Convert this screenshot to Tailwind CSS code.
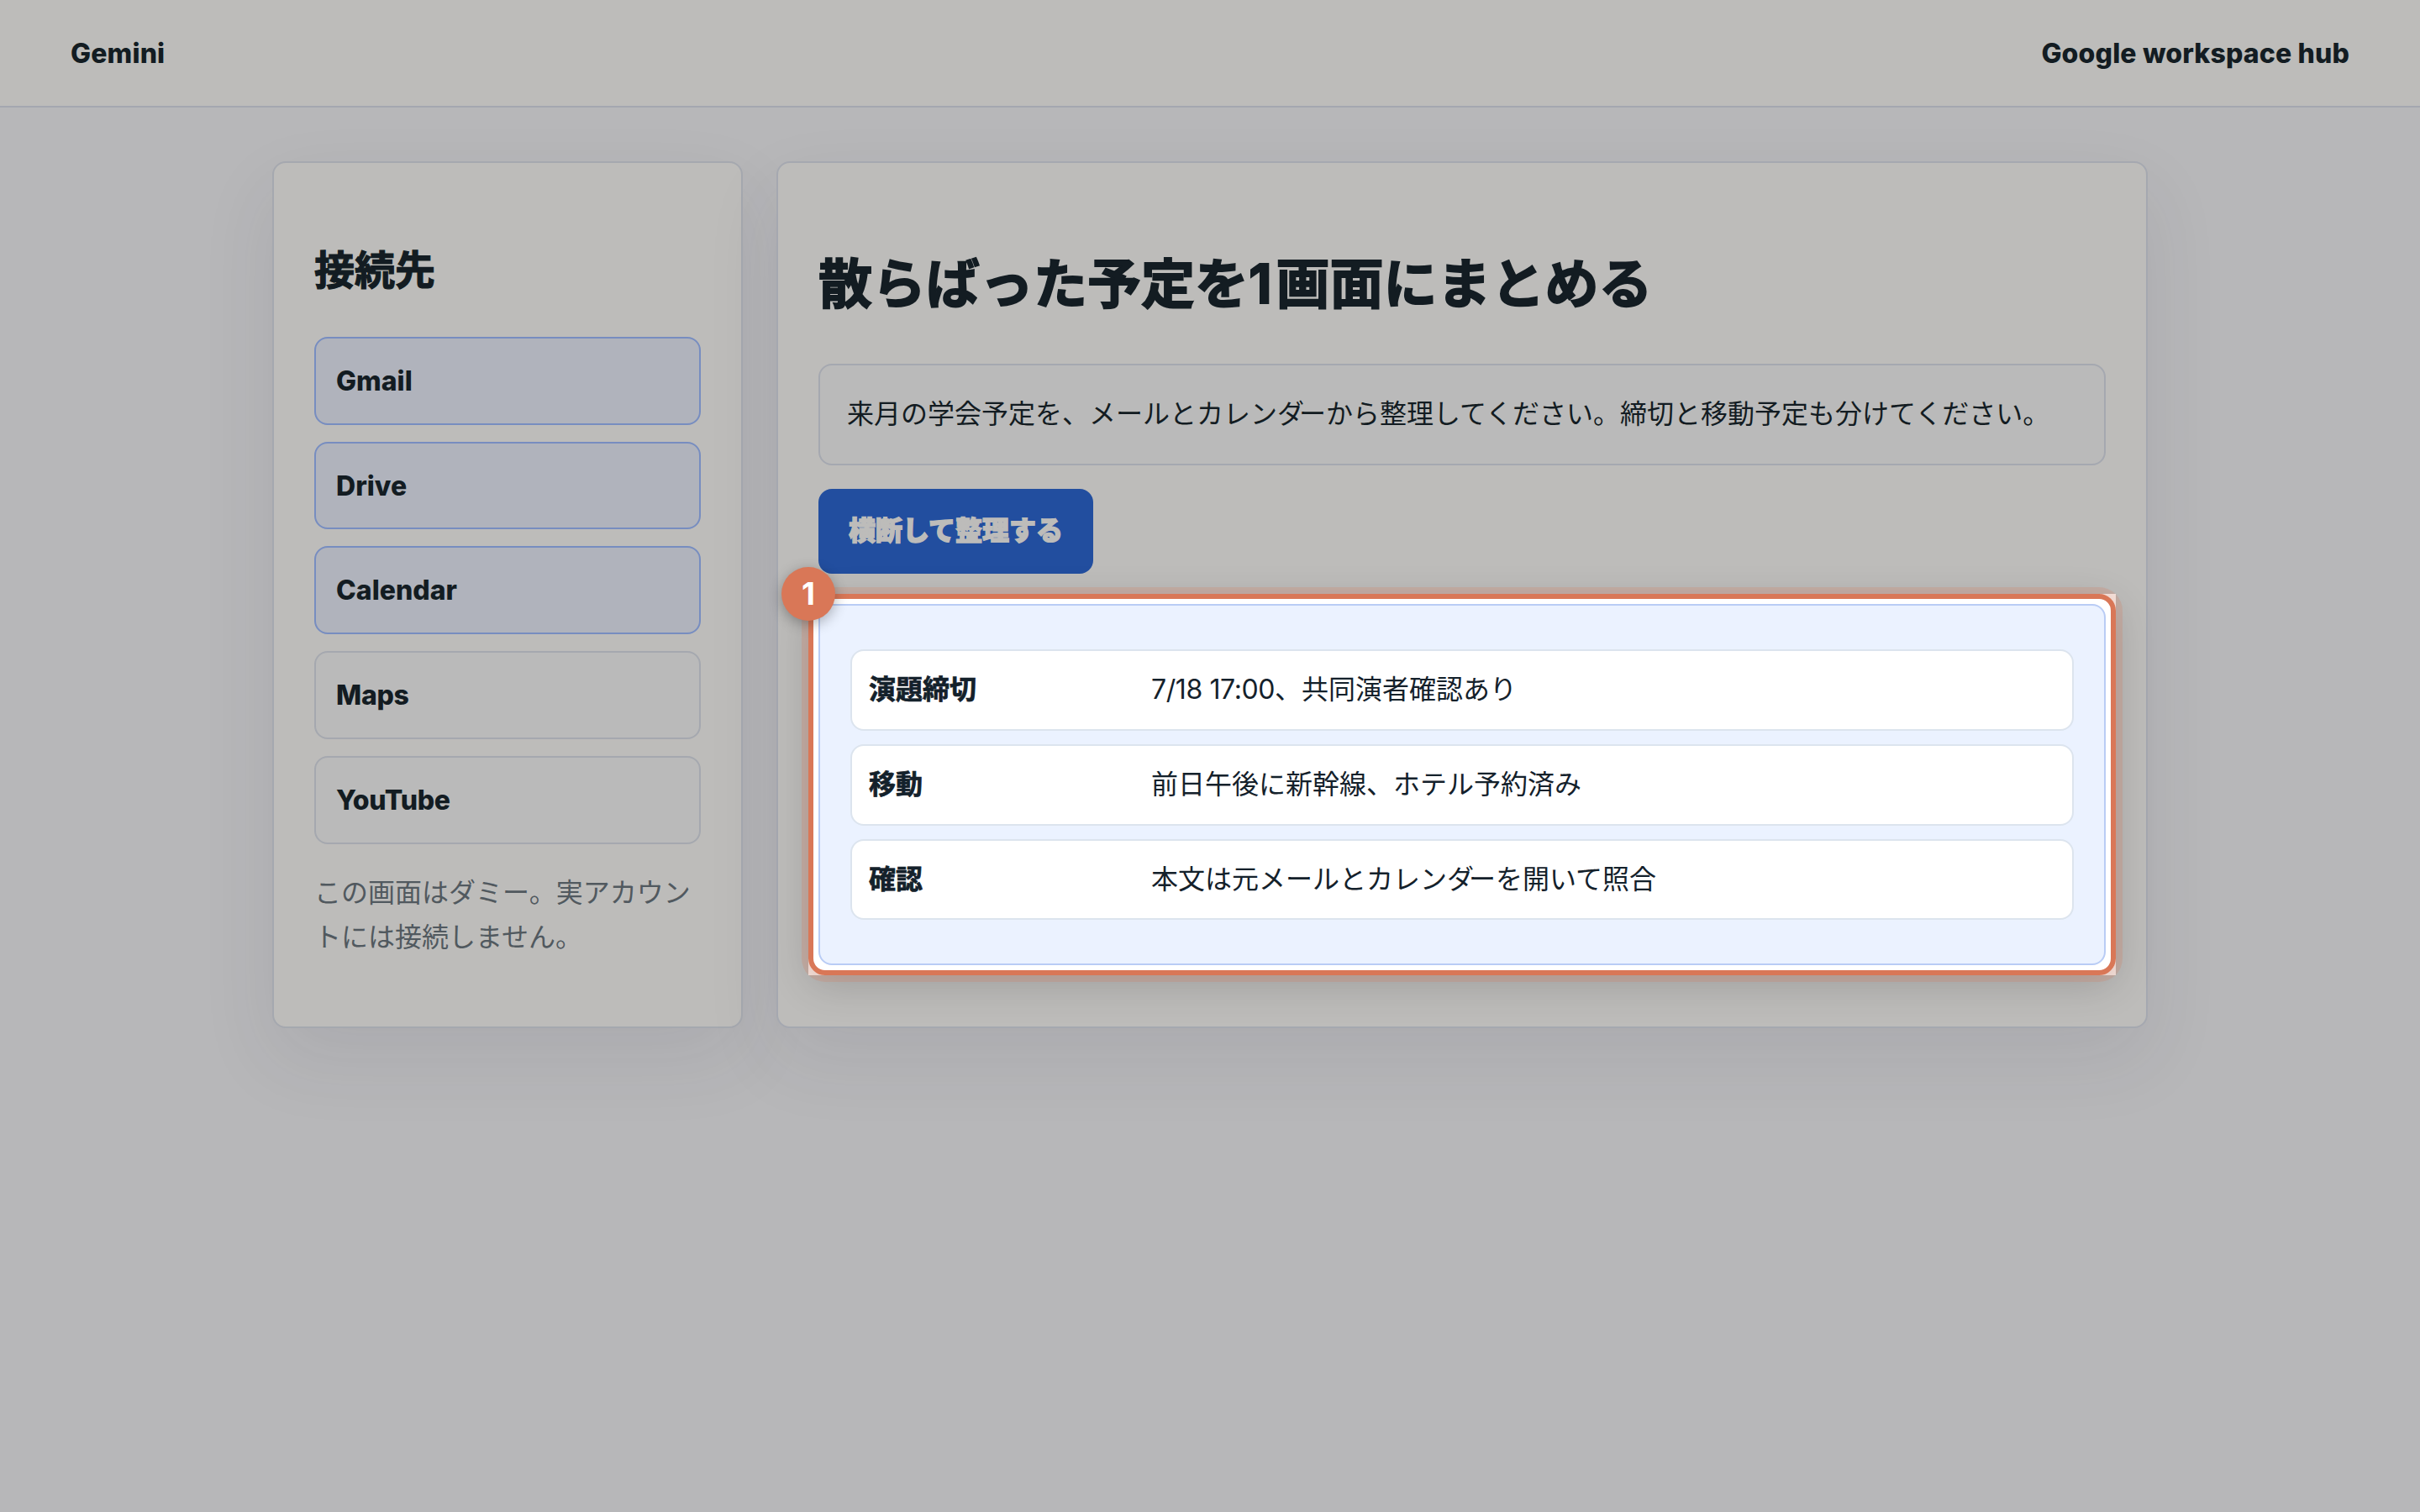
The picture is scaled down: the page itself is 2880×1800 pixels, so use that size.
<!DOCTYPE html>
<html lang="ja">
  <head>
    <meta charset="UTF-8" />
    <meta name="viewport" content="width=device-width, initial-scale=1.0" />
    <title>Gemini</title>
    <script src="https://cdn.jsdelivr.net/npm/@tailwindcss/browser@4"></script>
  </head>
  <body
    class="min-h-screen bg-[#b7b7b9] font-['Inter','Noto_Sans_CJK_JP',sans-serif] text-[32px] leading-[1.65] text-[#131c22]"
  >
    <header
      class="flex h-32 items-center justify-between border-b-2 border-[#a4a7b0] bg-[#bdbcba] px-[84px] pt-0.5 font-extrabold tracking-[0.15px]"
    >
      <span>Gemini</span>
      <span>Google workspace hub</span>
    </header>
    <main
      class="mx-auto mt-16 grid w-[2232px] grid-cols-[560px_1fr] gap-10"
    >
      <aside
        class="rounded-2xl border-2 border-[#a5a8af] bg-[#bdbcba] p-12 shadow-[0_36px_90px_rgba(42,42,70,0.085)]"
      >
        <h2
          class="my-[39.84px] text-[48px] leading-[1.65] font-bold [-webkit-text-stroke:1.2px_#131c22]"
        >
          接続先
        </h2>
        <div class="flex flex-col gap-5 font-extrabold">
          <div
            class="rounded-2xl border-2 border-[#778dc0] bg-[#b0b3bc] px-6 pt-[25px] pb-[23px]"
          >
            Gmail
          </div>
          <div
            class="rounded-2xl border-2 border-[#778dc0] bg-[#b0b3bc] px-6 pt-[25px] pb-[23px]"
          >
            Drive
          </div>
          <div
            class="rounded-2xl border-2 border-[#778dc0] bg-[#b0b3bc] px-6 pt-[25px] pb-[23px]"
          >
            Calendar
          </div>
          <div
            class="rounded-2xl border-2 border-[#a5a8af] bg-[#bababa] px-6 pt-[25px] pb-[23px] tracking-[-0.3px]"
          >
            Maps
          </div>
          <div
            class="rounded-2xl border-2 border-[#a5a8af] bg-[#bababa] px-6 pt-[25px] pb-[23px] tracking-[-0.3px]"
          >
            YouTube
          </div>
        </div>
        <p class="my-8 text-[#51595f]">
          この画面はダミー。実アカウントには接続しません。
        </p>
      </aside>
      <section
        class="rounded-2xl border-2 border-[#a5a8b0] bg-[#bdbcba] p-12 shadow-[0_36px_90px_rgba(42,42,70,0.085)]"
      >
        <h1
          class="my-[42.88px] text-[64px] leading-[1.65] font-bold [-webkit-text-stroke:1.8px_#131c22]"
        >
          散らばった予定を<span class="tracking-[5px]">1</span>画面にまとめる
        </h1>
        <div class="rounded-2xl border-2 border-[#a5a8b0] bg-[#bababa] p-8">
          来月の学会予定を、メールとカレン<span class="tracking-[-6px]">ダ</span>ーから整理してください。締切と移動予定も分けてください。
        </div>
        <button
          class="mt-7 block w-[327px] rounded-2xl bg-[#224e9f] py-6 text-center font-black text-[#bdbcba] [-webkit-text-stroke:1.4px_#bdbcba]"
        >
          横断して整理する
        </button>
        <!-- highlighted result -->
        <div class="relative mt-9 text-[#14212b]">
          <div class="absolute -inset-3 bg-white"></div>
          <div
            class="relative flex flex-col gap-4 rounded-2xl border-2 border-[#b9ccf5] bg-[#ebf2ff] px-9 py-[52px]"
          >
            <div
              class="grid grid-cols-[320px_1fr] gap-4 rounded-2xl border-2 border-[#dce4ee] bg-white p-5"
            >
              <strong class="font-bold [-webkit-text-stroke:0.7px_#14212b]">演題締切</strong>
              <span><span class="tracking-[-0.4px]">7/18 17:00</span>、共同演者確認あり</span>
            </div>
            <div
              class="grid grid-cols-[320px_1fr] gap-4 rounded-2xl border-2 border-[#dce4ee] bg-white p-5"
            >
              <strong class="font-bold [-webkit-text-stroke:0.7px_#14212b]">移動</strong>
              <span>前日午後に新幹線、ホテル予約済み</span>
            </div>
            <div
              class="grid grid-cols-[320px_1fr] gap-4 rounded-2xl border-2 border-[#dce4ee] bg-white p-5"
            >
              <strong class="font-bold [-webkit-text-stroke:0.7px_#14212b]">確認</strong>
              <span>本文は元メールとカレン<span class="tracking-[-6px]">ダ</span>ーを開いて照合</span>
            </div>
          </div>
          <div
            class="absolute -inset-3 rounded-[20px] border-6 border-[#d97757] shadow-[0_0_0_8px_rgba(217,119,87,0.22),0_12px_48px_rgba(0,0,0,0.16)]"
          ></div>
          <div
            class="absolute -top-11 -left-11 flex size-16 items-center justify-center rounded-full bg-[#d97757] text-[37px] leading-none font-bold text-white shadow-[0_4px_16px_rgba(0,0,0,0.3)]"
          >
            1
          </div>
        </div>
      </section>
    </main>
  </body>
</html>
